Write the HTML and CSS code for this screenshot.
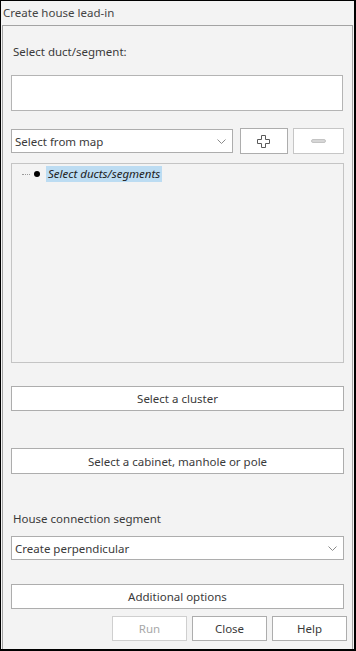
FILE: index.html
```html
<!DOCTYPE html>
<html>
<head>
  <meta name="viewport" content="width=device-width, initial-scale=1.0">
  <link rel="stylesheet" href="styles.css">
</head>
<body>
  <div class="window">
    <div class="title">Create house lead-in</div>

    <div class="panel">
      <div class="label first-label">Select duct/segment:</div>
      <div class="text-box"></div>

      <!-- Picker row -->
      <div class="picker-row">
        <div class="combo combo-short">
          <span>Select from map</span>
          <svg class="chevron" width="9" height="5" viewBox="0 0 9 5"><path d="M0.5 0.5 L4.5 4.5 L8.5 0.5" fill="none" stroke="#8a8a8a" stroke-width="1"/></svg>
        </div>
        <button class="icon-button">
          <svg width="13" height="13" viewBox="0 0 13 13"><path d="M4.5 0.5 H8.5 V4.5 H12.5 V8.5 H8.5 V12.5 H4.5 V8.5 H0.5 V4.5 H4.5 Z" fill="#fff" stroke="#5a5a5a" stroke-width="1"/></svg>
        </button>
        <button class="icon-button">
          <svg width="15" height="4" viewBox="0 0 15 4"><rect x="0.5" y="0.5" width="14" height="3" rx="1.5" fill="#d6d6d6" stroke="#c4c4c4"/></svg>
        </button>
      </div>

      <!-- Tree -->
      <div class="tree">
        <div class="tree-item">
          <span class="tree-dots"></span>
          <span class="tree-bullet"></span>
          <span class="tree-text">Select ducts/segments</span>
        </div>
      </div>

      <button class="wide-button cluster-button">Select a cluster</button>
      <button class="wide-button cabinet-button">Select a cabinet, manhole or pole</button>

      <div class="label second-label">House connection segment</div>
      <div class="combo combo-long">
        <span>Create perpendicular</span>
        <svg class="chevron" width="9" height="5" viewBox="0 0 9 5"><path d="M0.5 0.5 L4.5 4.5 L8.5 0.5" fill="none" stroke="#8a8a8a" stroke-width="1"/></svg>
      </div>

      <button class="wide-button options-button">Additional options</button>

      <div class="footer">
        <button class="footer-button" disabled>Run</button>
        <button class="footer-button">Close</button>
        <button class="footer-button">Help</button>
      </div>
    </div>
  </div>
</body>
</html>
```

FILE: styles.css
```css
body {
  margin: 0;
  padding: 0;
  font-family: 'Noto Sans', 'Open Sans', sans-serif;
  font-size: 11.5px;
  color: #3a3a3a;
}

.window {
  box-sizing: border-box;
  width: 356px;
  height: 651px;
  border: 1px solid #000;
  border-right-width: 2px;
  border-bottom-width: 2px;
  background: #f3f3f3;
  display: flex;
  flex-direction: column;
}

.title {
  height: 24px;
  line-height: 24px;
  padding-left: 2px;
  color: #444;
}

.panel {
  flex: 1;
  margin: 0 1px 0 1px;
  border: 1px solid #a3a3a3;
  border-bottom: none;
  padding: 0 8px 0 8px;
  display: flex;
  flex-direction: column;
}

.label {
  line-height: 16px;
  padding-left: 2px;
}

.first-label {
  margin-top: 18px;
}

.second-label {
  margin-top: 37px;
}

.text-box {
  margin-top: 15px;
  height: 34px;
  background: #fff;
  border: 1px solid #b4b4b4;
  margin-right: 1px;
}

.picker-row {
  margin-top: 17px;
  height: 26px;
  display: flex;
  align-items: center;
  gap: 5px;
}

.combo {
  box-sizing: border-box;
  height: 24px;
  background: #fff;
  border: 1px solid #adadad;
  display: flex;
  align-items: center;
  justify-content: space-between;
  padding: 0 6px 0 3px;
}

.combo-short {
  width: 223px;
  margin-right: 2px;
}

.combo-long {
  margin-top: 9px;
}

.chevron {
  display: block;
}

.icon-button {
  box-sizing: border-box;
  width: 49px;
  height: 26px;
  background: #fff;
  border: 1px solid #adadad;
  display: flex;
  align-items: center;
  justify-content: center;
  padding: 0;
}

.icon-button + .icon-button {
  width: 51px;
  border-color: #c6c6c6;
}

.tree {
  box-sizing: border-box;
  margin-top: 9px;
  height: 200px;
  border: 1px solid #c4c4c4;
  background: #f3f3f3;
  padding-top: 2px;
}

.tree-item {
  display: flex;
  align-items: center;
  height: 16px;
}

.tree-dots {
  width: 8px;
  margin-left: 10px;
  border-top: 1px dotted #9a9a9a;
}

.tree-bullet {
  width: 6px;
  height: 6px;
  border-radius: 50%;
  background: #000;
  margin-left: 4px;
}

.tree-text {
  margin-left: 6px;
  padding: 0 2px 0 2px;
  line-height: 16px;
  font-style: italic;
  background: #bcdcf2;
  color: #222;
}

.wide-button {
  box-sizing: border-box;
  height: 25px;
  background: #fff;
  border: 1px solid #adadad;
  font-family: inherit;
  font-size: 11.5px;
  color: #3a3a3a;
  padding: 0;
}

.cluster-button {
  margin-top: 23px;
}

.cabinet-button {
  margin-top: 37px;
  height: 26px;
}

.options-button {
  margin-top: 24px;
}

.footer {
  margin-top: 7px;
  display: flex;
  justify-content: flex-end;
  gap: 5px;
  margin-right: -3px;
}

.footer-button {
  box-sizing: border-box;
  width: 75px;
  height: 25px;
  background: #fff;
  border: 1px solid #adadad;
  font-family: inherit;
  font-size: 11.5px;
  color: #3a3a3a;
  padding: 0;
}

.footer-button:disabled {
  border-color: #cfcfcf;
  color: #a8a8a8;
}
```
